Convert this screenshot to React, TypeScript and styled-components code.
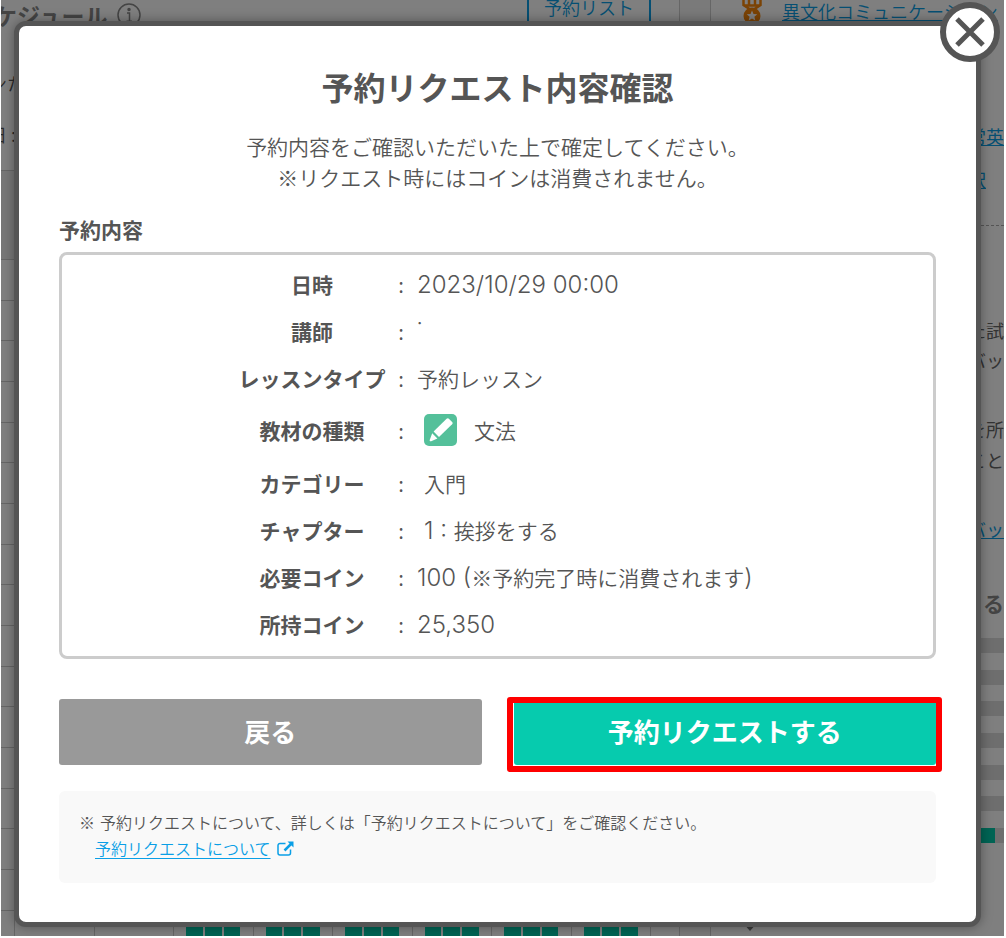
import React from "react";
import styled, { createGlobalStyle } from "styled-components";

const GlobalStyle = createGlobalStyle`
  *, *::before, *::after { box-sizing: border-box; }
  body {
    margin: 0;
    background: #fff;
    color: #555;
    font-family: "Noto Sans CJK JP", sans-serif;
    font-size: 21px;
    font-weight: 350;
  }
  h1, h2, p, dl, dd, dt, ul { margin: 0; padding: 0; }
  a { color: #0a9fe6; }
  button { font-family: inherit; cursor: pointer; }
`;

const Screen = styled.div`
  position: relative;
  overflow: hidden;
  margin: 0 2px 2px 1px;
`;

const Page = styled.div`
  position: absolute;
  inset: 0;
  overflow: hidden;
  display: grid;
  grid-template-columns: minmax(0, 678fr) 32px minmax(0, 293fr);
  background: #fff;
`;

const Schedule = styled.section`
  display: flex;
  flex-direction: column;
  padding-right: 28px;
`;

const ScheduleTop = styled.div`
  display: flex;
  justify-content: space-between;
  align-items: flex-start;
  height: 68px;
`;

const ScheduleTitle = styled.h2`
  display: flex;
  align-items: center;
  gap: 10px;
  margin-left: -7px;
  font-size: 23px;
  line-height: 30px;
  font-weight: 700;
  color: #888;
`;

const ListLink = styled.a`
  height: 40px;
  padding: 0 15px;
  border: 2px solid #0a9fe6;
  border-top: 0;
  font-size: 18px;
  line-height: 14px;
  text-decoration: none;
`;

const Legend = styled.p`
  height: 51px;
  margin-left: -12px;
  font-size: 18px;
  line-height: 30px;
  white-space: nowrap;
`;

const Slots = styled.ul`
  list-style: none;
`;

const SlotHead = styled.li`
  height: 89px;
  border-top: 1px solid #ccc;
  background: #eee;
`;

const SlotRow = styled.li`
  display: grid;
  grid-template-columns: 13px repeat(8, minmax(0, 1fr));
  height: 41px;
  border-top: 1px solid #ccc;
  border-right: 1px solid #ccc;
  &:nth-child(3n) { height: 40px; }
`;

const SlotCell = styled.div`
  display: flex;
  gap: 2px;
  padding: 0 12px;
  border-left: 1px solid #ccc;
`;

const Slot = styled.span`
  flex: 1;
  background: #00c9a8;
`;

const Gutter = styled.div`
  border: solid #ccc;
  border-width: 0 1px;
  background: #f4f4f4;
`;

const Profile = styled.aside`
  display: flex;
  flex-direction: column;
  overflow: hidden;
`;

const Badge = styled.div`
  display: flex;
  align-items: flex-start;
  gap: 19px;
  height: 121px;
  padding-left: 30px;
  white-space: nowrap;
  font-size: 18px;
  line-height: 22px;
`;

const SideText = styled.p<{ $height: number; $inset?: number; $strong?: boolean }>`
  height: ${(p) => p.$height}px;
  padding-right: ${(p) => p.$inset ?? 0}px;
  text-align: right;
  white-space: nowrap;
  font-size: ${(p) => (p.$strong ? 21 : 18)}px;
  font-weight: ${(p) => (p.$strong ? 700 : 400)};
  line-height: 30px;
  color: ${(p) => (p.$strong ? "#888" : "#666")};
`;

const Divider = styled.div`
  height: 90px;
  border-top: 1px dashed #aaa;
`;

const Bars = styled.div`
  display: grid;
  grid-auto-rows: 15px;
  align-content: space-between;
  height: 205px;
`;

const Bar = styled.div<{ $fill?: number }>`
  display: flex;
  background: #dcdcdc;
  &::before {
    content: "";
    width: ${(p) => p.$fill ?? 0}%;
    background: #00c9a8;
  }
`;

const Marker = styled.svg`
  margin: 80px 0 0 32px;
`;

const Overlay = styled.div`
  position: relative;
  padding: 21px 23px 9px 13px;
  background: rgba(0, 0, 0, 0.5);
`;

const Dialog = styled.section`
  position: relative;
  padding: 37px 40px 39px;
  border: 5px solid #555;
  border-radius: 12px;
  background: #fff;
  box-shadow: 0 0 12px rgba(0, 0, 0, 0.35);
`;

const CloseButton = styled.button`
  position: absolute;
  top: -24px;
  right: -24px;
  display: grid;
  place-items: center;
  width: 60px;
  height: 60px;
  padding: 0;
  border: 6px solid #555;
  border-radius: 50%;
  background: #fff;
  color: #555;
`;

const Title = styled.h1`
  font-size: 32px;
  line-height: 46px;
  font-weight: 700;
  text-align: center;
`;

const Lead = styled.p`
  margin-top: 22px;
  line-height: 31px;
  text-align: center;
`;

const SectionTitle = styled.h2`
  margin: 20px 0 7px;
  font-size: 21px;
  line-height: 32px;
  font-weight: 700;
`;

const Details = styled.dl`
  padding: 5px 0 9px;
  border: 3px solid #ccc;
  border-radius: 8px;
`;

const DetailRow = styled.div<{ $tall?: boolean }>`
  display: grid;
  grid-template-columns: 176px 148px 30px minmax(0, 1fr);
  align-items: center;
  height: ${(p) => (p.$tall ? 58 : 47)}px;
`;

const DetailLabel = styled.dt`
  grid-column: 2;
  font-weight: 700;
  text-align: center;
  white-space: nowrap;
`;

const Colon = styled.span`
  text-align: center;
`;

const DetailValue = styled.dd<{ $indent?: boolean }>`
  padding-left: ${(p) => (p.$indent ? 8 : 1)}px;
`;

const Numeral = styled.span`
  font-family: Inter, sans-serif;
  font-size: 24px;
  font-weight: 300;
  line-height: 28px;
  white-space: pre;
`;

const Subject = styled.span`
  display: flex;
  align-items: center;
  gap: 17px;
`;

const Actions = styled.div`
  display: grid;
  grid-template-columns: minmax(0, 1fr) minmax(0, 1fr);
  gap: 32px;
  margin-top: 40px;
`;

const ActionButton = styled.button<{ $primary?: boolean }>`
  width: 100%;
  height: 66px;
  padding: 0 0 4px;
  border: 0;
  border-radius: 3px;
  background: ${(p) => (p.$primary ? "#06cbae" : "#999")};
  color: #fff;
  font-size: 26px;
  font-weight: 700;
`;

const Highlight = styled.div`
  position: relative;
  &::after {
    content: "";
    position: absolute;
    inset: -2px -6px -7px -7px;
    border: 6px solid #f00;
    border-radius: 3px;
    pointer-events: none;
  }
`;

const Notice = styled.div`
  margin-top: 26px;
  padding: 18px 20px 22px;
  border-radius: 6px;
  background: #f9f9f9;
  font-size: 16px;
  line-height: 26px;
`;

const NoticeText = styled.p`
  display: flex;
  gap: 5px;
`;

const NoticeLink = styled.a`
  display: flex;
  align-items: center;
  gap: 6px;
  width: fit-content;
  margin-left: 16px;
  text-decoration: none;
`;

const LinkLabel = styled.span`
  text-decoration: underline;
  text-underline-offset: 3px;
`;

const CloseIcon = () => (
  <svg width="30" height="30" viewBox="0 0 30 30" stroke="currentColor" strokeWidth="5">
    <path d="M2 2l26 26M28 2L2 28" />
  </svg>
);

const PencilIcon = () => (
  <svg width="33" height="32" viewBox="0 0 33 32">
    <rect width="33" height="32" rx="5" fill="#54c09a" />
    <path
      d="M22.600 4.800c.8-.7 1.600-.7 2.300 0l3.200 3.300c.7.8.7 1.500 0 2.200L15 22.900 9.600 17.500z"
      fill="#fff"
    />
    <path d="M8.200 19.200l5.200 5.300-6.200 2.700c-1.200.4-1.900-.2-1.400-1.400z" fill="#fff" />
  </svg>
);

const ExternalIcon = () => (
  <svg width="17" height="15" viewBox="0 0 17 15" fill="none" stroke="currentColor">
    <path d="M8.500 2.500H3A2 2 0 0 0 1 4.500v7.500a2 2 0 0 0 2 2h8.500a2 2 0 0 0 2-2V8.500" strokeWidth="1.500" />
    <path d="M7.500 9.500L14 3" strokeWidth="2.500" />
    <path d="M10.500 .5H16.500V6.500z" fill="currentColor" stroke="none" />
  </svg>
);

const InfoIcon = () => (
  <svg width="24" height="24" viewBox="0 0 24 24" fill="none" stroke="#888" strokeWidth="1.500">
    <circle cx="12" cy="12" r="11" />
    <path d="M10 10h2.500v8M9.500 18.200h5.500" />
    <circle cx="12" cy="6.500" r="1" fill="#888" />
  </svg>
);

const MedalIcon = () => (
  <svg width="22" height="22" viewBox="0 0 22 22" fill="none" stroke="#f7860a" strokeWidth="2.500">
    <path d="M2.500 0v5l6 4M19.500 0v5l-6 4M8 0v6M14 0v6M2.500 5.500h17" />
    <circle cx="11" cy="16" r="8.500" fill="#f7860a" stroke="none" />
    <path d="M11 10.500l1.500 3.500 3.800.3-2.900 2.500.9 3.700-3.300-2-3.300 2 .9-3.700-2.900-2.500 3.800-.3z" fill="#fff" stroke="none" />
  </svg>
);

type Detail = {
  label: string;
  value: React.ReactNode;
  indent?: boolean;
  tall?: boolean;
};

const details: Detail[] = [
  { label: "日時", value: <Numeral>2023/10/29 00:00</Numeral> },
  { label: "講師", value: <Numeral>˙</Numeral> },
  { label: "レッスンタイプ", value: "予約レッスン" },
  {
    label: "教材の種類",
    value: (
      <Subject>
        <PencilIcon />
        文法
      </Subject>
    ),
    indent: true,
    tall: true,
  },
  { label: "カテゴリー", value: "入門", indent: true },
  { label: "チャプター", value: <><Numeral>{"1 : "}</Numeral>挨拶をする</>, indent: true },
  { label: "必要コイン", value: <><Numeral>{"100 ("}</Numeral>※予約完了時に消費されます<Numeral>)</Numeral></> },
  { label: "所持コイン", value: <Numeral>25,350</Numeral> },
];

const slotRows = Array.from({ length: 17 }, (_, row) => row);
const slotColumns = Array.from({ length: 8 }, (_, column) => column);
const barFills = [0, 0, 0, 0, 0, 0, 97];

export default function App() {
  return (
    <>
      <GlobalStyle />
      <Screen>
        <Page aria-hidden="true">
          <Schedule>
            <ScheduleTop>
              <ScheduleTitle>
                ケジュール
                <InfoIcon />
              </ScheduleTitle>
              <ListLink href="#list">予約リスト</ListLink>
            </ScheduleTop>
            <Legend>ンた</Legend>
            <Legend>日 :</Legend>
            <Slots>
              <SlotHead />
              {slotRows.map((row) => (
                <SlotRow key={row}>
                  <span />
                  {slotColumns.map((column) => (
                    <SlotCell key={column}>
                      {row === 16 && column > 1 && (
                        <>
                          <Slot />
                          <Slot />
                          <Slot />
                        </>
                      )}
                    </SlotCell>
                  ))}
                </SlotRow>
              ))}
            </Slots>
          </Schedule>
          <Gutter />
          <Profile>
            <Badge>
              <MedalIcon />
              <a href="#culture">異文化コミュニケーション</a>
            </Badge>
            <SideText $height={43}><a href="#daily">常英</a></SideText>
            <SideText $height={61} $inset={18}><a href="#daily">択</a></SideText>
            <Divider />
            <SideText $height={30}>た試</SideText>
            <SideText $height={69}>バッ</SideText>
            <SideText $height={31}>を所</SideText>
            <SideText $height={69}>こと</SideText>
            <SideText $height={74}><a href="#badge">バッ</a></SideText>
            <SideText $height={50} $strong>る</SideText>
            <Bars>
              {barFills.map((fill, i) => (
                <Bar key={i} $fill={fill} />
              ))}
            </Bars>
            <Marker width="14" height="8" viewBox="0 0 14 8">
              <path d="M0 0h14L7 8z" fill="#777" />
            </Marker>
          </Profile>
        </Page>
        <Overlay>
          <Dialog role="dialog" aria-modal="true" aria-labelledby="dialog-title">
            <CloseButton type="button" aria-label="閉じる">
              <CloseIcon />
            </CloseButton>
            <Title id="dialog-title">予約リクエスト内容確認</Title>
            <Lead>
              予約内容をご確認いただいた上で確定してください。
              <br />
              ※リクエスト時にはコインは消費されません。
            </Lead>
            <SectionTitle>予約内容</SectionTitle>
            <Details>
              {details.map((d) => (
                <DetailRow key={d.label} $tall={d.tall}>
                  <DetailLabel>{d.label}</DetailLabel>
                  <Colon>:</Colon>
                  <DetailValue $indent={d.indent}>{d.value}</DetailValue>
                </DetailRow>
              ))}
            </Details>
            <Actions>
              <ActionButton type="button">戻る</ActionButton>
              <Highlight>
                <ActionButton type="button" $primary>予約リクエストする</ActionButton>
              </Highlight>
            </Actions>
            <Notice>
              <NoticeText>
                <span>※</span>
                <span>予約リクエストについて、詳しくは「予約リクエストについて」をご確認ください。</span>
              </NoticeText>
              <NoticeLink href="#about">
                <LinkLabel>予約リクエストについて</LinkLabel>
                <ExternalIcon />
              </NoticeLink>
            </Notice>
          </Dialog>
        </Overlay>
      </Screen>
    </>
  );
}
